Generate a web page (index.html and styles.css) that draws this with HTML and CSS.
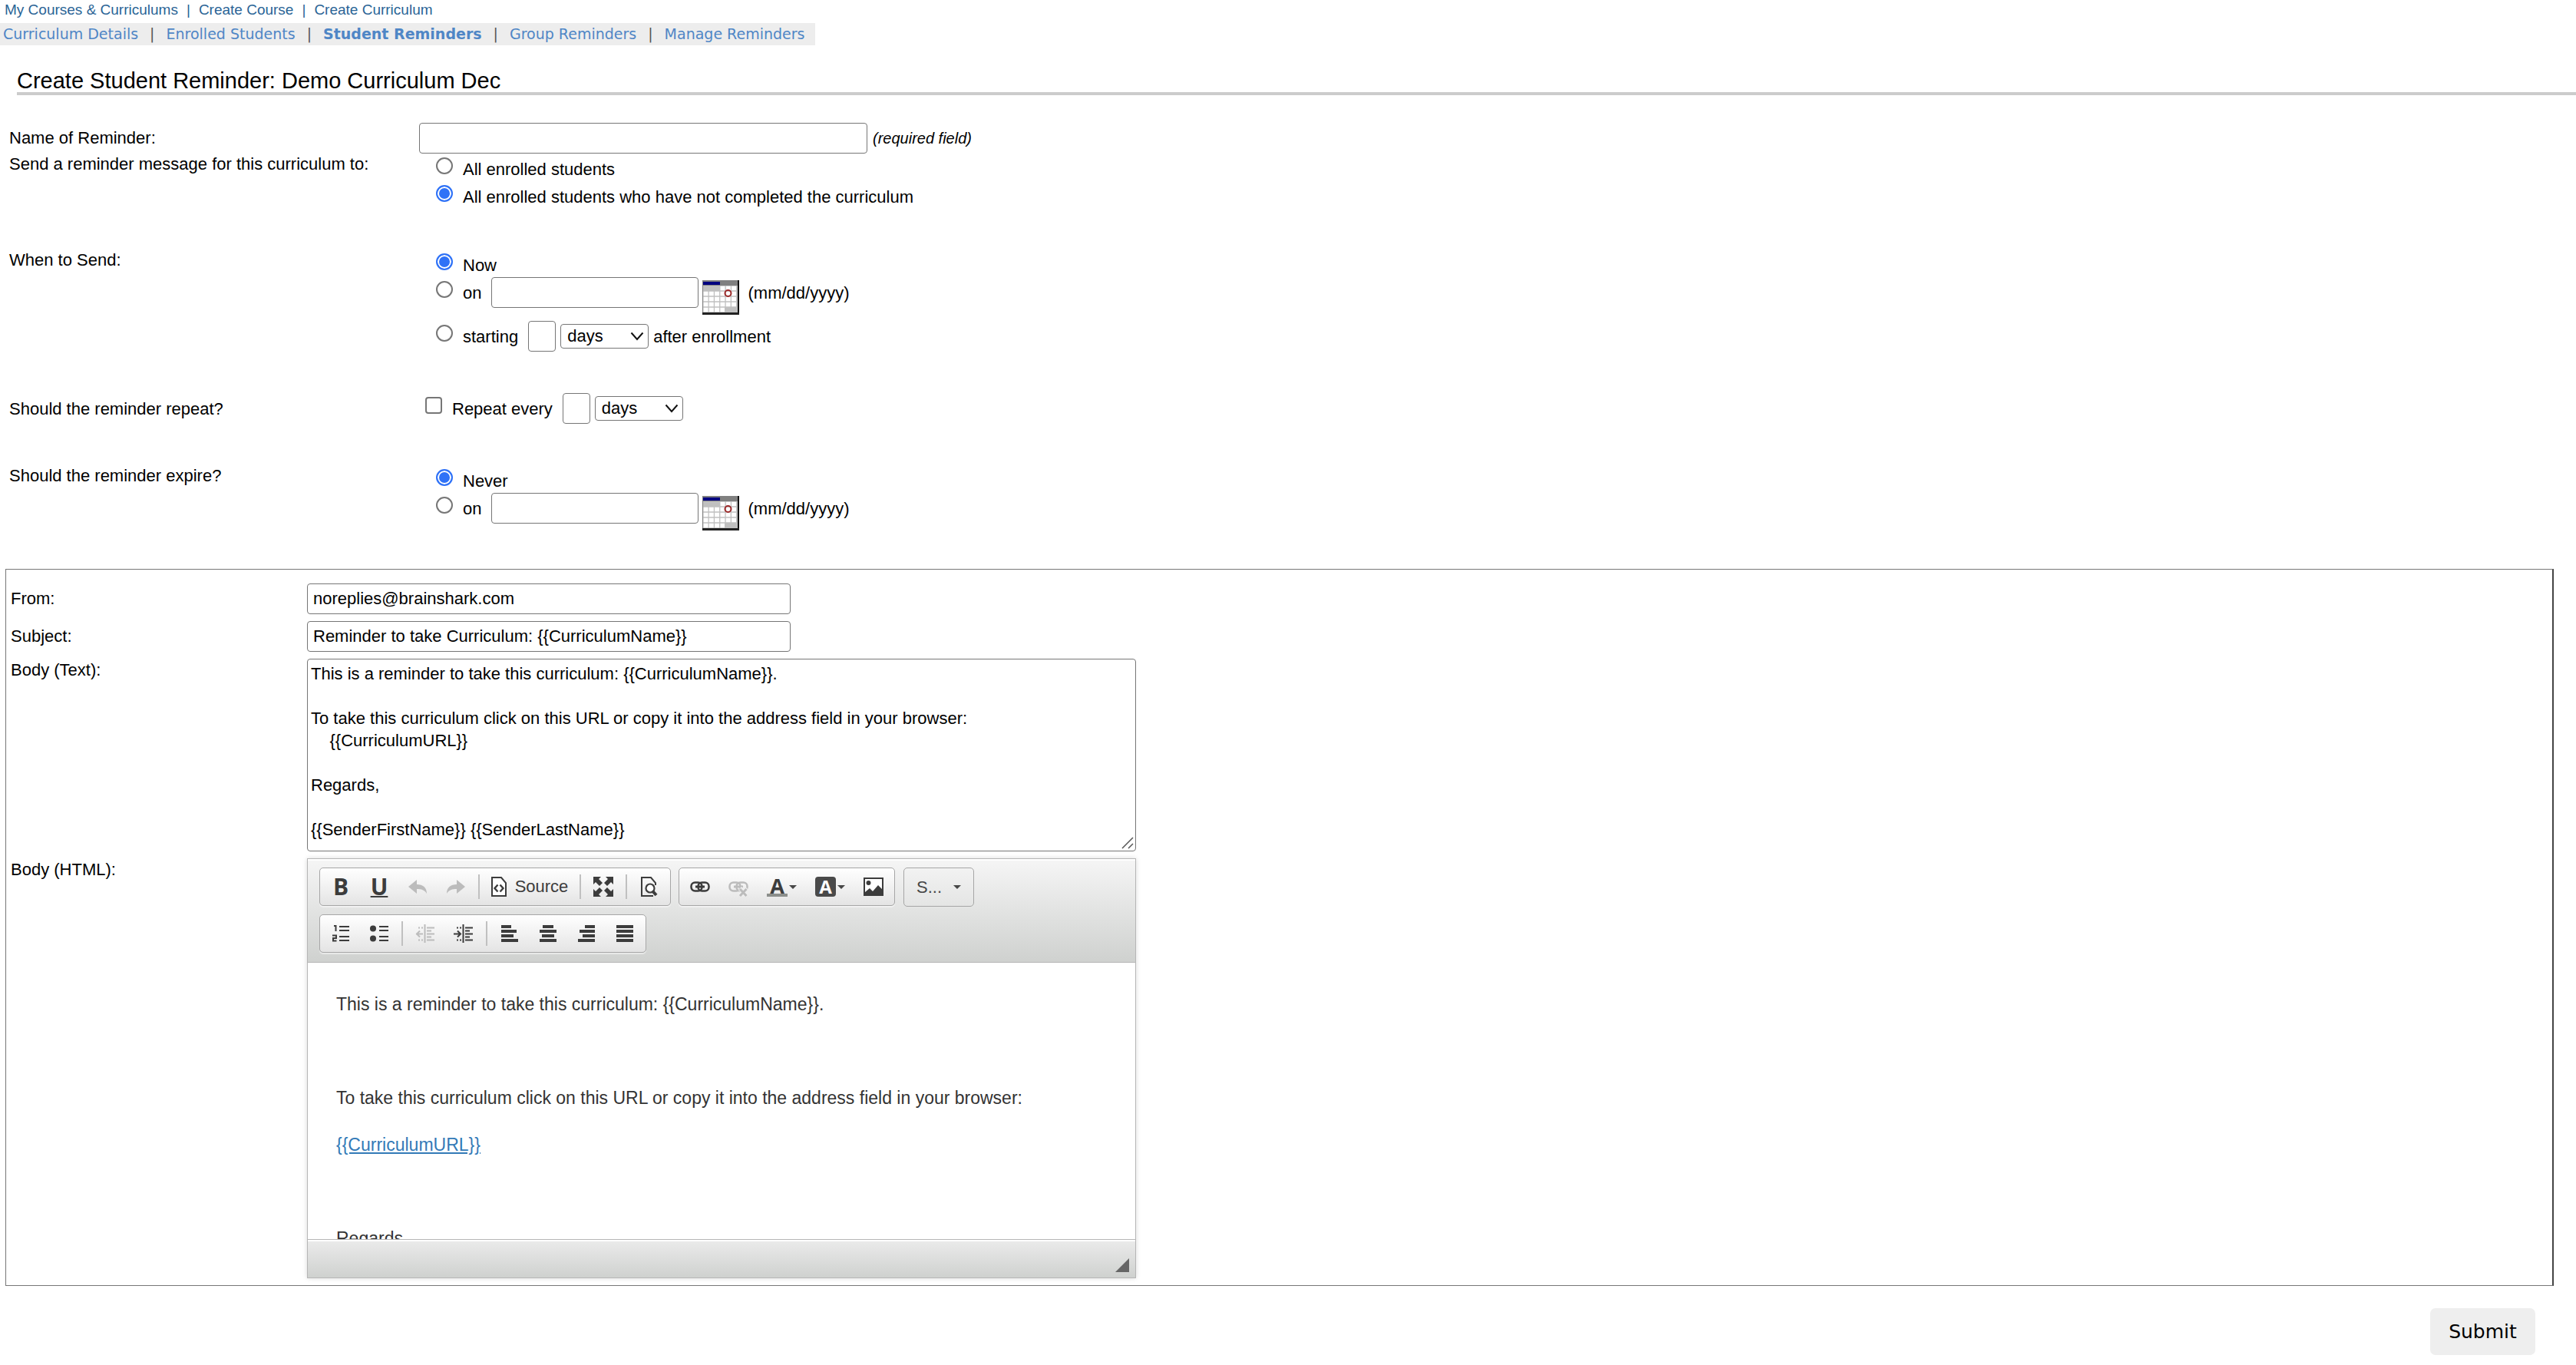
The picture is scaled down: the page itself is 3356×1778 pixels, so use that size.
FILE: index.html
```html
<!DOCTYPE html>
<html lang="en">
<head>
<meta charset="utf-8">
<title>Create Student Reminder</title>
<link rel="stylesheet" href="styles.css">
</head>
<body>
<nav class="topnav" aria-label="Main">
  <a href="#">My Courses &amp; Curriculums</a><span class="bar">|</span><a href="#">Create Course</a><span class="bar">|</span><a href="#">Create Curriculum</a>
</nav>
<nav class="subnav" aria-label="Curriculum">
  <a href="#">Curriculum Details</a><span class="bar">|</span><a href="#">Enrolled Students</a><span class="bar">|</span><a href="#" class="current">Student Reminders</a><span class="bar">|</span><a href="#">Group Reminders</a><span class="bar">|</span><a href="#">Manage Reminders</a>
</nav>

<h1 class="title">Create Student Reminder: Demo Curriculum Dec</h1>

<form class="form">
  <div class="settings">
    <div class="row row-name">
      <label for="name">Name of Reminder:</label>
      <div class="line line-name">
        <input type="text" id="name" class="field">
        <em class="required">(required field)</em>
      </div>
    </div>

    <div class="row" role="radiogroup" aria-labelledby="lbl-to">
      <span id="lbl-to">Send a reminder message for this curriculum to:</span>
      <div class="options">
        <div class="option"><input type="radio" name="to" id="to-all" class="tick"><label class="txt" for="to-all">All enrolled students</label></div>
        <div class="option"><input type="radio" name="to" id="to-open" class="tick" checked><label class="txt" for="to-open">All enrolled students who have not completed the curriculum</label></div>
      </div>
    </div>

    <div class="row row-gap" role="radiogroup" aria-labelledby="lbl-when">
      <span id="lbl-when">When to Send:</span>
      <div class="options">
        <div class="option"><input type="radio" name="when" id="when-now" class="tick" checked><label class="txt" for="when-now">Now</label></div>
        <div class="option option-date">
          <input type="radio" name="when" id="when-on" class="tick"><label class="txt" for="when-on">on</label>
          <span class="date">
            <input type="text" class="field field-date" aria-label="Send date">
            <button type="button" class="cal" aria-label="Pick send date"><svg width="48" height="45" viewBox="0 0 48 45"><use href="#calendar"/></svg></button>
            <span class="txt hint">(mm/dd/yyyy)</span>
          </span>
        </div>
        <div class="option">
          <input type="radio" name="when" id="when-start" class="tick"><label class="txt" for="when-start">starting</label>
          <span class="period">
            <input type="text" class="field field-num" aria-label="Starting after">
            <span class="pick"><select aria-label="Starting unit"><option>days</option><option>weeks</option><option>months</option></select><svg class="chev" width="18" height="12" viewBox="0 0 18 12"><path d="M1.500 1.500L9 10L16.500 1.500" fill="none" stroke="#111" stroke-width="2"/></svg></span>
            <span class="txt">after enrollment</span>
          </span>
        </div>
      </div>
    </div>

    <div class="row row-gap-lg row-repeat">
      <span class="txt">Should the reminder repeat?</span>
      <div class="option option-repeat">
        <input type="checkbox" id="repeat" class="tick tick-box"><label class="txt" for="repeat">Repeat every</label>
        <span class="period">
          <input type="text" class="field field-num" aria-label="Repeat interval">
          <span class="pick"><select aria-label="Repeat unit"><option>days</option><option>weeks</option><option>months</option></select><svg class="chev" width="18" height="12" viewBox="0 0 18 12"><path d="M1.500 1.500L9 10L16.500 1.500" fill="none" stroke="#111" stroke-width="2"/></svg></span>
        </span>
      </div>
    </div>

    <div class="row row-gap-lg" role="radiogroup" aria-labelledby="lbl-exp">
      <span id="lbl-exp">Should the reminder expire?</span>
      <div class="options">
        <div class="option"><input type="radio" name="exp" id="exp-never" class="tick" checked><label class="txt" for="exp-never">Never</label></div>
        <div class="option option-date">
          <input type="radio" name="exp" id="exp-on" class="tick"><label class="txt" for="exp-on">on</label>
          <span class="date">
            <input type="text" class="field field-date" aria-label="Expiry date">
            <button type="button" class="cal" aria-label="Pick expiry date"><svg width="48" height="45" viewBox="0 0 48 45"><use href="#calendar"/></svg></button>
            <span class="txt hint">(mm/dd/yyyy)</span>
          </span>
        </div>
      </div>
    </div>
  </div>

  <section class="message">
    <label for="from">From:</label>
    <input type="text" id="from" class="field field-mail" value="noreplies@brainshark.com">
    <label for="subject">Subject:</label>
    <input type="text" id="subject" class="field field-mail" value="Reminder to take Curriculum: {{CurriculumName}}">
    <label for="body" class="top">Body (Text):</label>
    <div class="area">
      <textarea id="body" class="field">This is a reminder to take this curriculum: {{CurriculumName}}.

To take this curriculum click on this URL or copy it into the address field in your browser:
    {{CurriculumURL}}

Regards,

{{SenderFirstName}} {{SenderLastName}}</textarea>
      <svg class="grip" width="16" height="16" viewBox="0 0 16 16"><path d="M1 15L15 1M9 15L15 9" stroke="#555" stroke-width="1.500" fill="none"/></svg>
    </div>
    <span id="lbl-html" class="top">Body (HTML):</span>
    <div class="editor">
      <div class="toolbar" role="toolbar" aria-label="Editor">
        <div class="group">
          <button type="button" class="tb letter" aria-label="Bold">B</button>
          <button type="button" class="tb letter under" aria-label="Underline">U</button>
          <button type="button" class="tb off" aria-label="Undo"><svg width="26" height="26" viewBox="0 0 26 26"><path d="M1 13L12 4V10C20 10 25 14 25 22C22 17 18 16 12 16V22Z" fill="currentColor"/></svg></button>
          <button type="button" class="tb off" aria-label="Redo"><svg width="26" height="26" viewBox="0 0 26 26"><path d="M25 13L14 4V10C6 10 1 14 1 22C4 17 8 16 14 16V22Z" fill="currentColor"/></svg></button>
          <i class="sep"></i>
          <button type="button" class="tb source"><svg width="20" height="26" viewBox="0 0 20 26"><path d="M1 1H13L19 8V25H1Z" fill="#fff" stroke="currentColor" stroke-width="2"/><path d="M8.500 10.500L4.500 15L8.500 19.500M11.500 10.500L15.500 15L11.500 19.500" fill="none" stroke="currentColor" stroke-width="2.400"/></svg>Source</button>
          <i class="sep"></i>
          <button type="button" class="tb" aria-label="Maximize"><svg width="26" height="26" viewBox="0 0 26 26"><path d="M0 0H10L7 3L12 8L8 12L3 7L0 10ZM26 0H16L19 3L14 8L18 12L23 7L26 10ZM0 26H10L7 23L12 18L8 14L3 19L0 16ZM26 26H16L19 23L14 18L18 14L23 19L26 16Z" fill="currentColor"/></svg></button>
          <i class="sep"></i>
          <button type="button" class="tb" aria-label="Preview"><svg width="22" height="26" viewBox="0 0 22 26"><path d="M16 25H1V1H13L19 8V11" fill="none" stroke="currentColor" stroke-width="2"/><circle cx="12" cy="15" r="5.500" fill="#fff" stroke="currentColor" stroke-width="2.200"/><path d="M15.500 19L20 24" stroke="currentColor" stroke-width="4"/></svg></button>
        </div>
        <div class="group">
          <button type="button" class="tb" aria-label="Link"><svg width="26" height="26" viewBox="0 0 26 26"><use href="#link"/></svg></button>
          <button type="button" class="tb off" aria-label="Unlink"><svg width="26" height="26" viewBox="0 0 26 26"><use href="#link"/><path d="M15 15L24 25M24 15L15 25" stroke="#efefef" stroke-width="6"/><path d="M15 16L23.500 25M23.500 16L15 25" stroke="currentColor" stroke-width="3"/></svg></button>
          <button type="button" class="tb color" aria-label="Text color"><span class="glyph">A</span><i class="down"></i></button>
          <button type="button" class="tb color" aria-label="Background color"><span class="glyph solid">A</span><i class="down"></i></button>
          <button type="button" class="tb" aria-label="Image"><svg width="26" height="24" viewBox="0 0 26 24"><rect x="1" y="1" width="24" height="22" fill="#fff" stroke="currentColor" stroke-width="2"/><circle cx="6.500" cy="7" r="3" fill="currentColor"/><path d="M2 22V19L8 14L12 18L19 10L24 15V22Z" fill="currentColor"/></svg></button>
        </div>
        <button type="button" class="combo" aria-label="Size">S...<i class="down"></i></button>
        <i class="break"></i>
        <div class="group">
          <button type="button" class="tb" aria-label="Numbered list"><svg width="24" height="24" viewBox="0 0 24 24"><path d="M3 2H5.500V9M1 14.500H6V18H2V21.500H6.500" fill="none" stroke="currentColor" stroke-width="2"/><path d="M10 3H23M10 8H23M10 16H23M10 21H23" stroke="currentColor" stroke-width="2"/></svg></button>
          <button type="button" class="tb" aria-label="Bulleted list"><svg width="24" height="24" viewBox="0 0 24 24"><circle cx="4" cy="5.500" r="4" fill="currentColor"/><circle cx="4" cy="18.500" r="4" fill="currentColor"/><path d="M12 3H24M12 8H24M12 16H24M12 21H24" stroke="currentColor" stroke-width="2"/></svg></button>
          <i class="sep"></i>
          <button type="button" class="tb off" aria-label="Decrease indent"><svg width="26" height="24" viewBox="0 0 26 24"><path d="M4 4.500H6M8 4.500H10M4 20.500H6M8 20.500H10M1 12.500H10M6 8.500L2 12.500L6 16.500" fill="none" stroke="currentColor" stroke-width="2"/><path d="M12.500 0V24M15 4.500H25M15 8.500H21M15 12.500H25M15 16.500H21M15 20.500H25" stroke="currentColor" stroke-width="2"/></svg></button>
          <button type="button" class="tb" aria-label="Increase indent"><svg width="26" height="24" viewBox="0 0 26 24"><path d="M4 4.500H6M8 4.500H10M4 20.500H6M8 20.500H10M0 12.500H9M5 8.500L9 12.500L5 16.500" fill="none" stroke="currentColor" stroke-width="2"/><path d="M12.500 0V24M15 4.500H25M15 8.500H21M15 12.500H25M15 16.500H21M15 20.500H25" stroke="currentColor" stroke-width="2"/></svg></button>
          <i class="sep"></i>
          <button type="button" class="tb" aria-label="Align left"><svg width="24" height="22" viewBox="0 0 24 22"><path d="M1 2H14M1 8H21M1 14H17M1 20H23" stroke="currentColor" stroke-width="4"/></svg></button>
          <button type="button" class="tb" aria-label="Center"><svg width="24" height="22" viewBox="0 0 24 22"><path d="M5 2H19M1 8H23M4 14H20M1 20H23" stroke="currentColor" stroke-width="4"/></svg></button>
          <button type="button" class="tb" aria-label="Align right"><svg width="24" height="22" viewBox="0 0 24 22"><path d="M10 2H23M3 8H23M7 14H23M1 20H23" stroke="currentColor" stroke-width="4"/></svg></button>
          <button type="button" class="tb" aria-label="Justify"><svg width="24" height="22" viewBox="0 0 24 22"><path d="M1 2H23M1 8H23M1 14H23M1 20H23" stroke="currentColor" stroke-width="4"/></svg></button>
        </div>
      </div>
      <div class="content" contenteditable="true" role="textbox" aria-multiline="true" aria-labelledby="lbl-html">
        <p>This is a reminder to take this curriculum: {{CurriculumName}}.</p>
        <p>&nbsp;</p>
        <p>To take this curriculum click on this URL or copy it into the address field in your browser:</p>
        <p><a href="#">{{CurriculumURL}}</a></p>
        <p>&nbsp;</p>
        <p>Regards,</p>
      </div>
      <div class="footbar"><i class="resizer"></i></div>
    </div>
  </section>

  <div class="actions"><button type="submit" class="submit">Submit</button></div>
</form>

<svg class="defs" aria-hidden="true">
  <symbol id="calendar" viewBox="0 0 48 45">
    <rect width="48" height="45" fill="#808080"/>
    <rect x="46" width="2" height="45" fill="#111"/>
    <rect y="42" width="48" height="3" fill="#222"/>
    <rect x="1" y="2" width="22" height="4" fill="#000080"/>
    <rect x="1" y="7" width="45" height="35" fill="#c0c0c0"/>
    <path d="M23.500 10.500H45M1.500 17.500H45M1.500 24.500H45M1.500 31.500H45M1.500 38.500H29" stroke="#fff" stroke-width="5.500" stroke-dasharray="6 1.300"/>
    <circle cx="33.500" cy="17" r="4" fill="none" stroke="#9c2a2a" stroke-width="2"/>
  </symbol>
  <symbol id="link" viewBox="0 0 26 26">
    <rect x="1.500" y="7.500" width="14" height="11" rx="5" fill="none" stroke="currentColor" stroke-width="2.500"/>
    <rect x="10.500" y="7.500" width="14" height="11" rx="5" fill="none" stroke="currentColor" stroke-width="2.500"/>
    <path d="M7 13H19" stroke="currentColor" stroke-width="3"/>
  </symbol>
</svg>
</body>
</html>
```
FILE: styles.css
```css
* { box-sizing: border-box; }

body {
  margin: 0;
  background: #fff;
  color: #000;
  font: 22px/24px "Liberation Sans", Arial, Helvetica, sans-serif;
}

a { text-decoration: none; }
svg { display: block; flex: none; }
.defs { position: absolute; width: 0; height: 0; }

/* Navigation */
.topnav {
  display: flex;
  height: 30px;
  padding-left: 6px;
  font-size: 19px;
  line-height: 26px;
  color: #2a6496;
}
.topnav a { color: #2a6496; }
.topnav .bar { padding: 0 11px; }

.subnav {
  display: flex;
  width: fit-content;
  padding: 2px 14px 3px 4px;
  background: #ededed;
  font-family: "DejaVu Sans", Verdana, sans-serif;
  font-size: 19px;
  color: #555;
}
.subnav a { color: #4f86c6; }
.subnav .bar { padding: 0 15px; }
.subnav .current { font-weight: bold; }

.title {
  margin: 31px 0 36px 22px;
  border-bottom: 4px solid #ccc;
  font-size: 29px;
  line-height: 30px;
  font-weight: normal;
}

/* Reminder settings */
.settings { padding-left: 12px; }
.row {
  display: grid;
  grid-template-columns: 534px 1fr;
  align-items: start;
}
.row-name { align-items: center; margin-bottom: 2px; }
.row-gap { margin-top: 53px; }
.row-gap-lg { margin-top: 58px; }

.line, .option, .date, .period { display: flex; align-items: flex-start; }
.line-name { align-items: center; gap: 7px; }
.line-name .field { width: 584px; }
.required { font-size: 20px; }

.options { padding-left: 22px; }
.option { gap: 13px; height: 36px; }
.option-date { height: 57px; }
.option-repeat { padding-left: 8px; }
.txt { padding-top: 7px; }
.date { gap: 5px; }
.period { gap: 6px; }
.hint { padding-left: 6px; }

.tick {
  appearance: none;
  flex: none;
  width: 22px;
  height: 22px;
  margin: 3px 0 0;
  border: 2px solid #767676;
  border-radius: 50%;
  background: #fff;
}
.tick:checked {
  border-color: #2f72f7;
  background: #2f72f7;
  box-shadow: inset 0 0 0 2px #fff;
}
.tick-box { border-radius: 4px; }

.field {
  height: 40px;
  margin: 0;
  padding: 0 7px;
  border: 1px solid #767676;
  border-radius: 4px;
  background: #fff;
  color: #000;
  font: inherit;
}
.field-date, .field-num { margin-top: -2px; }
.field-date { width: 270px; }
.field-num { width: 36px; }

.cal {
  margin: 2px 0 0;
  padding: 0;
  border: 0;
  background: none;
}

.pick { position: relative; margin-top: 2px; }
.pick select {
  appearance: none;
  display: block;
  width: 115px;
  height: 32px;
  padding: 0 8px;
  border: 1px solid #767676;
  border-radius: 4px;
  background: #fff;
  color: #000;
  font: inherit;
}
.chev { position: absolute; right: 6px; top: 10px; pointer-events: none; }

/* Message box */
.message {
  display: grid;
  grid-template-columns: 386px 1fr;
  row-gap: 9px;
  align-items: center;
  margin: 40px 29px 0 7px;
  padding: 18px 6px 9px;
  border: 1px solid #777;
  border-right: 2px solid #444;
}
.message .top { align-self: start; padding-top: 3px; }
.field-mail { width: 630px; }
.area { position: relative; width: 1080px; }
.area textarea {
  display: block;
  width: 100%;
  height: 251px;
  padding: 4px;
  line-height: 29px;
  resize: none;
  overflow: hidden;
}
.grip { position: absolute; right: 3px; bottom: 3px; }

/* Rich text editor */
.editor {
  width: 1080px;
  border: 1px solid #b6b6b6;
  box-shadow: 0 0 6px rgba(0, 0, 0, .15);
}
.toolbar {
  display: flex;
  flex-wrap: wrap;
  gap: 5px 10px;
  padding: 9px 15px 12px;
  border-top: 2px solid #fff;
  border-bottom: 1px solid #b6b6b6;
  background: linear-gradient(#f5f5f5, #cfd1cf);
}
.group {
  display: flex;
  align-items: center;
  height: 50px;
  padding: 0 2px;
  border: 1px solid #a6a6a6;
  border-radius: 5px;
  background: linear-gradient(#fff, #e4e4e4);
  box-shadow: 0 2px 1px rgba(255, 255, 255, .5);
}
.break { flex-basis: 100%; }
.tb, .combo {
  display: flex;
  align-items: center;
  justify-content: center;
  height: 48px;
  margin: 0;
  padding: 0;
  border: 0;
  background: none;
  color: #474747;
  font: 22px/24px "Liberation Sans", Arial, sans-serif;
}
.tb { width: 50px; color: #3c3c3c; }
.letter { font: bold 30px/32px "Open Sans", "Noto Sans", sans-serif; }
.under { text-decoration: underline; text-decoration-thickness: 2px; }
.off { color: #bcbcbc; }
.source { width: 122px; gap: 11px; }
.sep { width: 2px; height: 32px; margin: 0 4px; background: #c0c0c0; }
.color { width: 63px; gap: 2px; }
.glyph {
  width: 27px;
  height: 26px;
  border-bottom: 4px solid #8c8f8c;
  font: bold 27px/23px "Open Sans", "Noto Sans", sans-serif;
}
.solid {
  border: 0;
  border-radius: 4px;
  background: #4a4a4a;
  color: #fff;
  font-size: 24px;
  line-height: 26px;
}
.down {
  width: 10px;
  border: 5px solid transparent;
  border-top-color: #474747;
  border-bottom: 0;
}
.combo {
  gap: 15px;
  width: 92px;
  height: 51px;
  margin-left: 1px;
  border: 1px solid #a6a6a6;
  border-radius: 5px;
}

.content {
  height: 360px;
  padding: 36px 37px 0;
  overflow: hidden;
  font-size: 23px;
  line-height: 37px;
  color: #333;
}
.content p { margin: 0 0 24px; }
.content a { color: #337ab7; text-decoration: underline; }

.footbar {
  display: flex;
  align-items: flex-end;
  justify-content: flex-end;
  height: 50px;
  padding: 0 8px 7px;
  border-top: 1px solid #b6b6b6;
  background: linear-gradient(#ebebeb, #cfd1cf);
  box-shadow: inset 0 2px #fff;
}
.resizer {
  border: 9px solid transparent;
  border-right-color: #666;
  border-bottom-color: #666;
}

.actions {
  display: flex;
  justify-content: flex-end;
  padding: 29px 53px 12px 0;
}
.submit {
  width: 137px;
  height: 61px;
  border: 0;
  border-radius: 7px;
  background: #eee;
  color: #000;
  font: 25px/30px "DejaVu Sans", Verdana, sans-serif;
}
```
